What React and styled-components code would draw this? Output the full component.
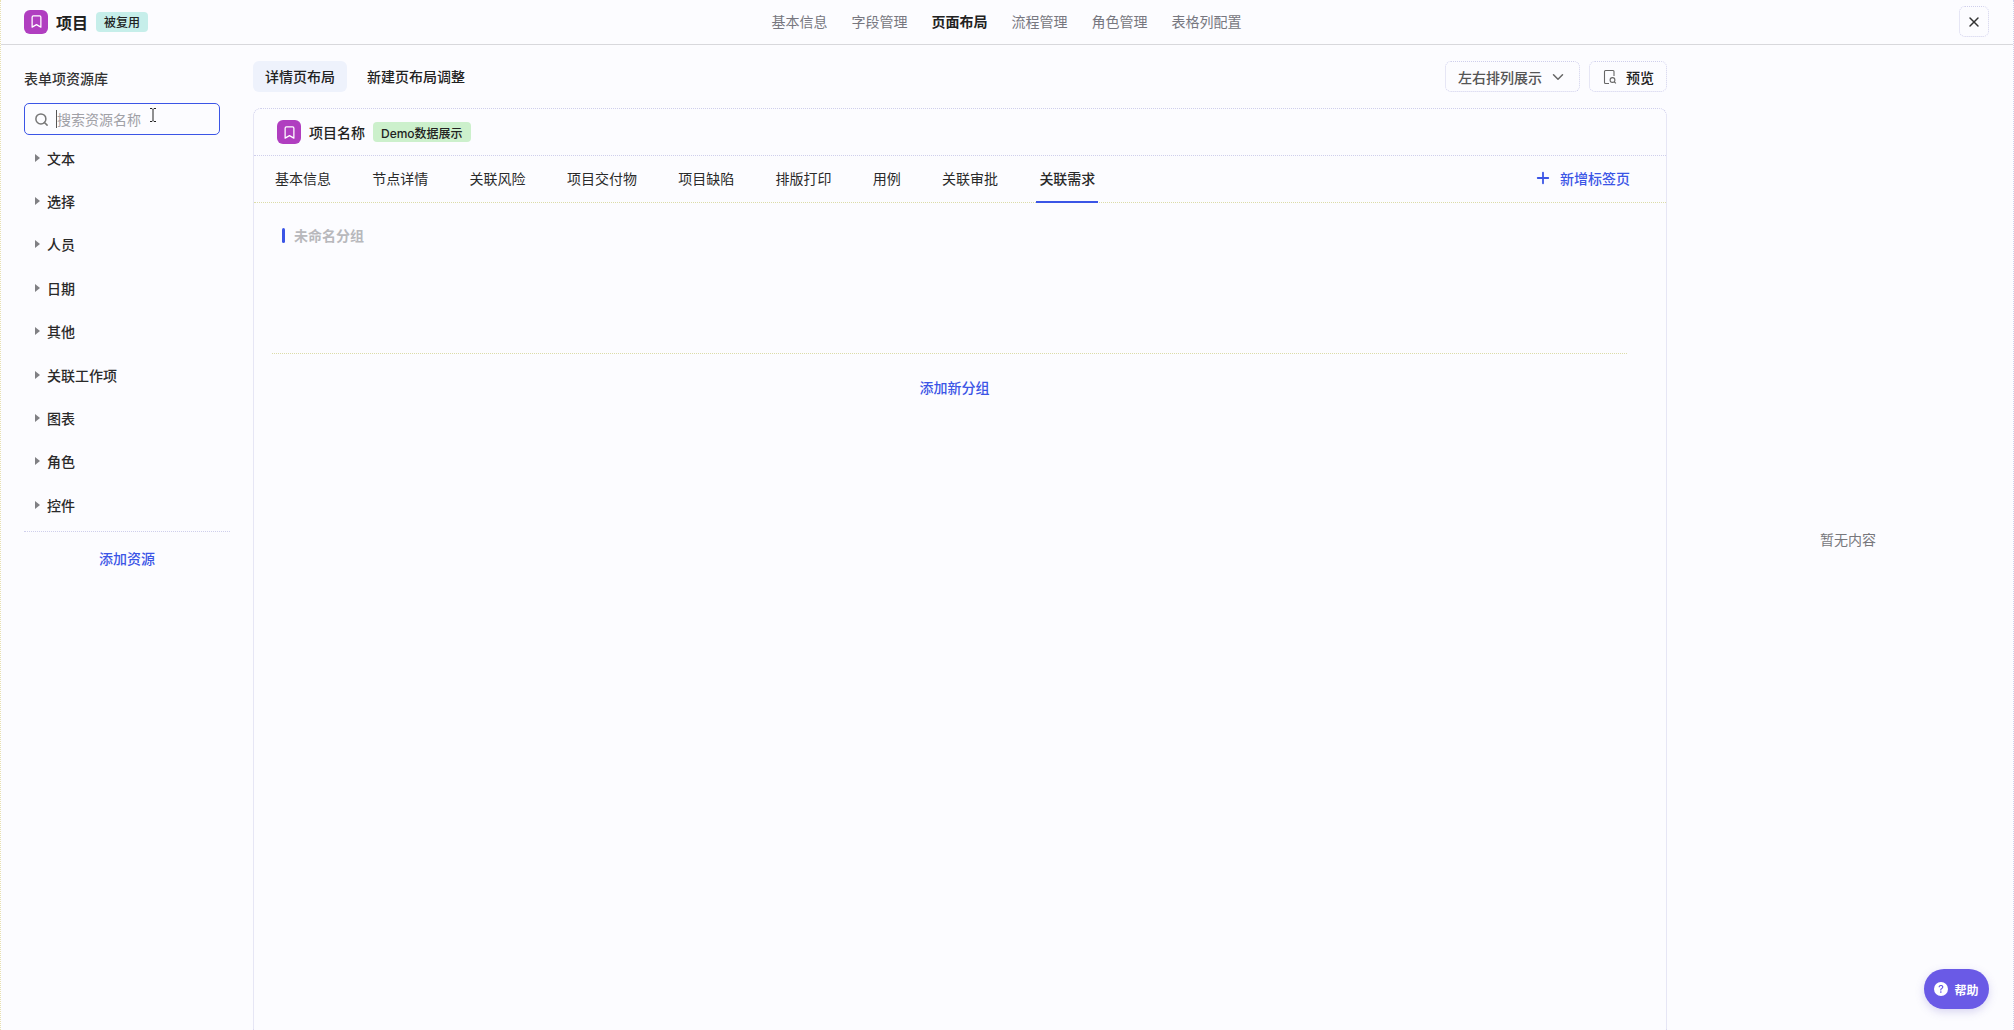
import React from "react";
import styled, { createGlobalStyle } from "styled-components";
import { Bookmark, Search, X, ChevronDown, Plus } from "lucide-react";
import { BsQuestionCircleFill } from "react-icons/bs";

const FONT = `Inter, "Noto Sans CJK SC", "Noto Sans", sans-serif`;
const BG = "#fcfcff";
const LINE = "#cfcfec";
const BLUE = "#3b55e6";

const Global = createGlobalStyle`
  html, body { margin: 0; padding: 0; height: 100%; background: ${BG}; }
  #root { height: 100%; }
  * { box-sizing: border-box; }
  body { font-family: ${FONT}; color: #222; }
`;

const Page = styled.div`
  height: 1030px;
  display: flex;
  flex-direction: column;
  overflow: hidden;
  position: relative;
  background: ${BG};
  border-left: 1px dotted #e8e0b0;
  border-right: 1px dotted ${LINE};
`;

const TopBar = styled.header`
  height: 45px;
  flex: none;
  display: grid;
  grid-template-columns: 1fr auto 1fr;
  align-items: center;
  padding: 0 24px 1px 23px;
  border-bottom: 1px solid #d8d8dc;
`;
const Brand = styled.div`
  display: flex;
  align-items: center;
`;
const Logo = styled.span`
  width: 24px;
  height: 24px;
  border-radius: 6px;
  background: #b03ec0;
  color: #fff;
  display: inline-flex;
  align-items: center;
  justify-content: center;
  flex: none;
`;
const AppTitle = styled.span`
  margin-left: 8px;
  font-size: 16px;
  font-weight: 600;
  color: #222;
`;
const Badge = styled.span`
  margin-left: 8px;
  height: 20px;
  padding: 0 8px;
  border-radius: 4px;
  display: inline-flex;
  align-items: center;
  font-size: 12px;
  font-weight: 500;
  color: #222;
  background: ${(p) => p.$bg};
`;
const Nav = styled.nav`
  display: flex;
  gap: 24px;
`;
const NavItem = styled.span`
  font-size: 14px;
  line-height: 20px;
  font-weight: ${(p) => (p.$active ? 600 : 400)};
  color: ${(p) => (p.$active ? "#222" : "#777780")};
`;
const CloseBtn = styled.button`
  justify-self: end;
  width: 30px;
  height: 31px;
  padding: 0;
  display: flex;
  align-items: center;
  justify-content: center;
  background: transparent;
  border: 1px dotted ${LINE};
  border-radius: 6px;
  color: #333;
`;

const Body = styled.div`
  flex: 1;
  min-height: 0;
  display: flex;
`;
const Sidebar = styled.aside`
  width: 252px;
  flex: none;
  padding: 24px 24px 0 23px;
  position: relative;
`;
const SideTitle = styled.div`
  font-size: 14px;
  line-height: 20px;
  font-weight: 500;
  color: #333;
`;
const SearchBox = styled.label`
  margin-top: 14px;
  width: 196px;
  height: 32px;
  display: flex;
  align-items: center;
  padding: 0 9px;
  border: 1px solid ${BLUE};
  border-radius: 5px;
  color: #777;
`;
const Caret = styled.span`
  margin-left: 7px;
  width: 1px;
  height: 18px;
  background: #555;
  flex: none;
`;
const SearchInput = styled.input`
  border: 0;
  outline: 0;
  padding: 0;
  background: transparent;
  min-width: 0;
  flex: 1;
  font: 400 14px ${FONT};
  &::placeholder { color: #a0a0a6; opacity: 1; }
`;
const IBeam = styled.svg`
  position: absolute;
  left: 148px;
  top: 63px;
`;
const ResourceList = styled.ul`
  list-style: none;
  margin: 0;
  padding: 0;
  margin-top: 1px;
`;
const ResourceRow = styled.li`
  height: 43.4px;
  display: flex;
  align-items: center;
  padding-left: 11px;
  gap: 7px;
  font-size: 14px;
  font-weight: 500;
  color: #2a2a2a;
`;
const Tri = styled.span`
  width: 0;
  height: 0;
  border-left: 5px solid #808084;
  border-top: 4px solid transparent;
  border-bottom: 4px solid transparent;
`;
const SideDivider = styled.div`
  margin-top: 4px;
  width: 206px;
  border-top: 1px dotted ${LINE};
`;
const AddResource = styled.div`
  margin-top: 17px;
  width: 206px;
  text-align: center;
  font-size: 14px;
  line-height: 20px;
  font-weight: 500;
  color: ${BLUE};
`;

const Main = styled.main`
  width: 1414px;
  flex: none;
  display: flex;
  flex-direction: column;
  padding-top: 16px;
`;
const ToolRow = styled.div`
  height: 31px;
  flex: none;
  display: flex;
  align-items: center;
`;
const ViewTab = styled.span`
  height: 31px;
  padding: 0 12px 1px;
  display: inline-flex;
  align-items: center;
  border-radius: 6px;
  font-size: 14px;
  font-weight: 500;
  color: #222;
  margin-right: 8px;
  background: ${(p) => (p.$active ? "#eef2fc" : "transparent")};
`;
const Spacer = styled.div`
  flex: 1;
`;
const ToolBtn = styled.button`
  height: 31px;
  display: inline-flex;
  align-items: center;
  gap: ${(p) => p.$gap}px;
  padding: 0 ${(p) => p.$pr}px 0 12px;
  margin-left: ${(p) => p.$ml || 0}px;
  background: transparent;
  border: 1px dotted ${LINE};
  border-radius: 6px;
  font: 500 14px ${FONT};
  color: ${(p) => p.$color};
`;

const Card = styled.section`
  margin-top: 16px;
  flex: 1;
  display: flex;
  flex-direction: column;
  border: 1px dotted ${LINE};
  border-bottom: 0;
  border-radius: 8px 8px 0 0;
`;
const CardHead = styled.div`
  height: 47px;
  flex: none;
  display: flex;
  align-items: center;
  padding-left: 23px;
  border-bottom: 1px dotted ${LINE};
`;
const CardTitle = styled.span`
  margin-left: 8px;
  font-size: 14px;
  font-weight: 500;
  color: #222;
`;
const TabRow = styled.div`
  height: 47px;
  flex: none;
  display: flex;
  align-items: stretch;
  padding: 0 36px 0 21px;
  gap: 41.3px;
  border-bottom: 1px dotted #dcdca8;
`;
const Tab = styled.span`
  position: relative;
  display: flex;
  align-items: center;
  padding-bottom: 2px;
  font-size: 14px;
  font-weight: ${(p) => (p.$active ? 500 : 400)};
  color: #2a2a2a;
  &::after {
    content: "";
    display: ${(p) => (p.$active ? "block" : "none")};
    position: absolute;
    left: -3px;
    right: -3px;
    bottom: -1px;
    height: 2px;
    background: ${BLUE};
  }
`;
const AddTab = styled.span`
  margin-left: auto;
  display: flex;
  align-items: center;
  gap: 8px;
  padding-bottom: 2px;
  font-size: 14px;
  font-weight: 500;
  color: ${BLUE};
`;
const GroupArea = styled.div`
  padding: 22px 39px 0 18px;
`;
const GroupHead = styled.div`
  display: flex;
  align-items: center;
  gap: 9px;
  padding-left: 10px;
  height: 20px;
`;
const GroupBar = styled.span`
  width: 3px;
  height: 15px;
  border-radius: 2px;
  background: ${BLUE};
`;
const GroupName = styled.span`
  font-size: 14px;
  font-weight: 600;
  color: #b8b8bc;
`;
const GroupLine = styled.div`
  margin-top: 108px;
  border-top: 1px dotted #dcdca8;
`;
const AddGroup = styled.div`
  margin-top: 24px;
  padding-left: 10px;
  text-align: center;
  font-size: 14px;
  line-height: 20px;
  font-weight: 500;
  color: ${BLUE};
`;

const RightPane = styled.aside`
  flex: 1;
  display: flex;
  align-items: center;
  justify-content: center;
  padding: 0 0 0 16px;
`;
const Empty = styled.span`
  font-size: 14px;
  color: #77777c;
  transform: translateY(1px);
`;

const HelpBtn = styled.button`
  position: absolute;
  left: 1923px;
  top: 969px;
  width: 65px;
  height: 40px;
  border: 0;
  border-radius: 20px;
  background: #6a5ae6;
  color: #fff;
  display: flex;
  align-items: center;
  justify-content: center;
  gap: 6px;
  font: 600 12px ${FONT};
  box-shadow: 0 3px 8px rgba(110, 100, 200, 0.25);
`;

const navItems = ["基本信息", "字段管理", "页面布局", "流程管理", "角色管理", "表格列配置"];
const resources = ["文本", "选择", "人员", "日期", "其他", "关联工作项", "图表", "角色", "控件"];
const tabs = ["基本信息", "节点详情", "关联风险", "项目交付物", "项目缺陷", "排版打印", "用例", "关联审批", "关联需求"];

const PreviewIcon = () => (
  <svg width="16" height="16" viewBox="0 0 16 16" fill="none" stroke="#666" strokeWidth="1.1">
    <path d="M7 14.5H3.5a1 1 0 0 1-1-1v-11a1 1 0 0 1 1-1h7.5a1 1 0 0 1 1 1V7" />
    <circle cx="10.5" cy="11" r="2.4" />
    <path d="M12.3 12.8l1.6 1.6" />
  </svg>
);

export default function App() {
  return (
    <Page>
      <Global />
      <TopBar>
        <Brand>
          <Logo><Bookmark size={15} strokeWidth={2} /></Logo>
          <AppTitle>项目</AppTitle>
          <Badge $bg="#c6eeea">被复用</Badge>
        </Brand>
        <Nav>
          {navItems.map((n) => (
            <NavItem key={n} $active={n === "页面布局"}>{n}</NavItem>
          ))}
        </Nav>
        <CloseBtn aria-label="关闭"><X size={16} strokeWidth={2.2} /></CloseBtn>
      </TopBar>
      <Body>
        <Sidebar>
          <SideTitle>表单项资源库</SideTitle>
          <SearchBox>
            <Search size={15} strokeWidth={2.4} />
            <Caret />
            <SearchInput placeholder="搜索资源名称" />
          </SearchBox>
          <IBeam width="8" height="14" viewBox="0 0 8 14" fill="none" stroke="#222" strokeWidth="1">
            <path d="M1 .5h2l1 1 1-1h2M4 1.5v11M1 13.5h2l1-1 1 1h2" />
          </IBeam>
          <ResourceList>
            {resources.map((r) => (
              <ResourceRow key={r}><Tri />{r}</ResourceRow>
            ))}
          </ResourceList>
          <SideDivider />
          <AddResource>添加资源</AddResource>
        </Sidebar>
        <Main>
          <ToolRow>
            <ViewTab $active>详情页布局</ViewTab>
            <ViewTab>新建页布局调整</ViewTab>
            <Spacer />
            <ToolBtn $gap={7} $pr={12} $color="#555">左右排列展示<ChevronDown size={18} color="#666" /></ToolBtn>
            <ToolBtn $gap={8} $pr={12} $ml={9} $color="#222"><PreviewIcon />预览</ToolBtn>
          </ToolRow>
          <Card>
            <CardHead>
              <Logo><Bookmark size={15} strokeWidth={2} /></Logo>
              <CardTitle>项目名称</CardTitle>
              <Badge $bg="#ccf0cc">Demo数据展示</Badge>
            </CardHead>
            <TabRow>
              {tabs.map((t) => (
                <Tab key={t} $active={t === "关联需求"}>{t}</Tab>
              ))}
              <AddTab><Plus size={18} strokeWidth={2.4} />新增标签页</AddTab>
            </TabRow>
            <GroupArea>
              <GroupHead><GroupBar /><GroupName>未命名分组</GroupName></GroupHead>
              <GroupLine />
              <AddGroup>添加新分组</AddGroup>
            </GroupArea>
          </Card>
        </Main>
        <RightPane><Empty>暂无内容</Empty></RightPane>
      </Body>
      <HelpBtn><BsQuestionCircleFill size={14} />帮助</HelpBtn>
    </Page>
  );
}
